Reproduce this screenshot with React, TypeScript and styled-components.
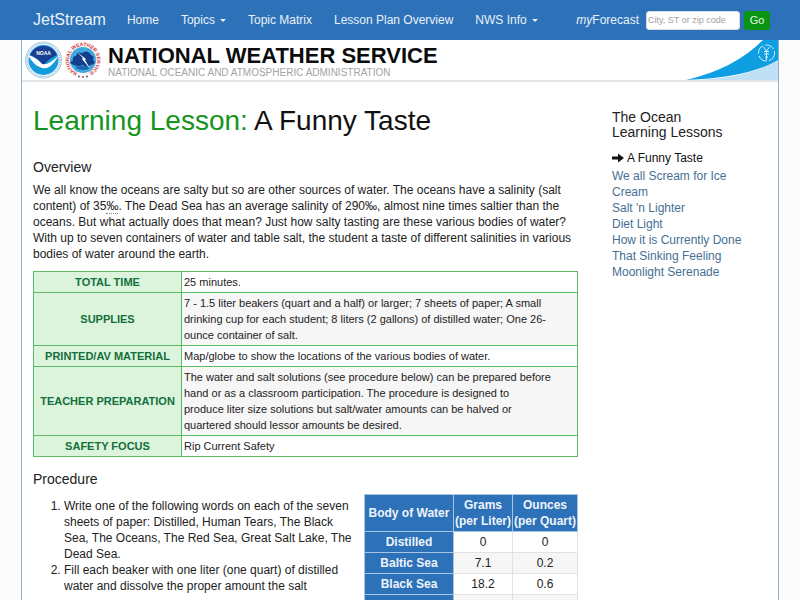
import React from "react";
import styled, { createGlobalStyle } from "styled-components";

const SANS = '"Liberation Sans", Arial, Helvetica, sans-serif';

const GlobalStyle = createGlobalStyle`
  *, *::before, *::after { box-sizing: border-box; }
  body {
    margin: 0;
    background: #fbfbfc;
    color: #222;
    font-family: ${SANS};
    font-size: 12px;
    line-height: 16px;
  }
`;

const NavBar = styled.nav`
  display: flex;
  align-items: center;
  min-height: 40px;
  padding: 0 30px 0 33px;
  background: #2d71b9;
  color: #e9f1fa;
`;

const Brand = styled.a`
  margin-right: 10px;
  color: #e9f1fa;
  font-size: 16px;
  text-decoration: none;
`;

const NavList = styled.ul`
  display: flex;
  flex: 1;
  margin: 0;
  padding: 0;
  list-style: none;
`;

const NavLink = styled.a`
  display: flex;
  align-items: center;
  gap: 5px;
  padding: 0 11px;
  color: #e9f1fa;
  text-decoration: none;
  white-space: nowrap;
`;

const Caret = styled.span`
  border: 3px solid transparent;
  border-top-color: currentColor;
  border-bottom: 0;
`;

const ForecastForm = styled.form`
  display: flex;
  align-items: center;
  gap: 4px;
`;

const ForecastLabel = styled.label`
  margin-right: 3px;
`;

const ForecastInput = styled.input`
  width: 94px;
  height: 19px;
  padding: 0 1px;
  border: 1px solid #d5dde6;
  border-radius: 3px;
  background: #fff;
  font: 9px ${SANS};
  &::placeholder { color: #a2a2a2; opacity: 1; }
`;

const GoButton = styled.button`
  width: 26px;
  height: 19px;
  padding: 0;
  border: 0;
  border-radius: 3px;
  background: #0a9412;
  color: #e4f6e4;
  font: 11px ${SANS};
`;

const Container = styled.div`
  margin: 0 21px;
  border: solid #8eb0c8;
  border-width: 0 1px;
  background: #fff;
`;

const Banner = styled.header`
  display: flex;
  align-items: stretch;
  height: 42px;
  padding-left: 3px;
  border-bottom: 2px solid #e4e4e4;
`;

const Logos = styled.div`
  display: flex;
  align-items: center;
  gap: 2px;
`;

const BannerText = styled.div`
  flex: 1;
  padding: 5px 0 0 6px;
  white-space: nowrap;
`;

const Agency = styled.div`
  color: #0c0c0c;
  font-size: 22px;
  font-weight: bold;
  line-height: 21px;
`;

const Department = styled.div`
  color: #a3a3a3;
  font-size: 10px;
  line-height: 13px;
`;

const Columns = styled.div`
  display: flex;
`;

const Main = styled.main`
  width: 75%;
  padding: 22px 11px;
`;

const Side = styled.aside`
  width: 25%;
  padding: 28px 30px 0 23px;
`;

const Title = styled.h1`
  margin: 0 0 21px;
  color: #111;
  font-size: 28px;
  font-weight: normal;
  line-height: 34px;
  span { color: #149420; }
`;

const Heading = styled.h2`
  margin: 0 0 7px;
  color: #222;
  font-size: 14px;
  font-weight: normal;
  line-height: 16px;
`;

const Paragraph = styled.p`
  margin: 0 0 9px;
`;

const Unit = styled.abbr`
  border-bottom: 1px dotted #888;
  text-decoration: none;
`;

const InfoTable = styled.table`
  width: 100%;
  margin-bottom: 14px;
  border-collapse: collapse;
  font-size: 11px;
  th, td {
    padding: 2px;
    border: 1px solid #5cbb63;
  }
  th {
    width: 148px;
    background: #dcf3dc;
    color: #12703a;
    white-space: nowrap;
  }
  td {
    text-align: left;
    white-space: pre-line;
  }
  tr:nth-child(even) td { background: #f6f6f6; }
`;

const Procedure = styled.div`
  display: flex;
  align-items: flex-start;
  gap: 8px;
`;

const Steps = styled.ol`
  flex: 1;
  margin: 4px 0 0;
  padding-left: 31px;
`;

const SaltTable = styled.table`
  width: 214px;
  border-collapse: collapse;
  text-align: center;
  th, td {
    padding: 2px 1px;
    border: 1px solid #e2e2e2;
  }
  th {
    border-color: #a9c5e3;
    background: #2d71b9;
    color: #eef4fb;
    white-space: nowrap;
  }
  th:first-child { width: 90px; }
  tbody tr:nth-child(even) td { background: #f6f6f6; }
`;

const SideTitle = styled.h2`
  margin: 0 0 10px;
  color: #222;
  font-size: 14px;
  font-weight: normal;
  line-height: 15px;
`;

const LessonList = styled.ul`
  margin: 0;
  padding: 0;
  list-style: none;
  a { color: #466f93; text-decoration: none; }
`;

const Current = styled.span`
  display: flex;
  align-items: center;
  gap: 3px;
  margin-bottom: 2px;
  color: #111;
`;

const NoaaLogo = () => (
  <svg width="37" height="38" viewBox="0 0 37 38" role="img" aria-label="NOAA">
    <circle cx="18.500" cy="19" r="18" fill="#eef5fa" stroke="#a9cde4" strokeWidth="1" />
    <circle cx="18.500" cy="19" r="16.500" fill="none" stroke="#6aa6cf" strokeWidth="1" strokeDasharray="1 1" />
    <circle cx="18.500" cy="19" r="15" fill="#139bdc" />
    <path d="M5 14 A14.500 14.500 0 0 1 32 14 Q26 16 18.500 24 Q11 16 5 14Z" fill="#183f91" />
    <path d="M3 14 Q11 16 17 23 Q23 25 33.500 14.500 Q30 22 24 26 Q21 28 17 27 Q9 25 3 14Z" fill="#fff" />
    <text x="18.500" y="14" textAnchor="middle" fill="#fff" fontFamily="Liberation Sans" fontWeight="bold" fontSize="5">NOAA</text>
  </svg>
);

const NwsLogo = () => (
  <svg width="38" height="38" viewBox="0 0 38 38" role="img" aria-label="National Weather Service">
    <defs>
      <path id="ring" d="M13.500 31.900 A14 14 0 1 1 24.500 31.900" />
    </defs>
    <circle cx="19" cy="19" r="18.500" fill="#fdf7f7" />
    <text fill="#cf3d45" fontFamily="Liberation Sans" fontWeight="bold" fontSize="5">
      <textPath href="#ring">NATIONAL WEATHER SERVICE</textPath>
    </text>
    <circle cx="19" cy="19" r="13" fill="#3fa8de" />
    <path d="M6 22 Q8 19 9 20 Q8 15 12 15 Q13 10 18 12 Q24 8 27 14 Q31 15 29 19 L31 21 Q30 24 26 24 Q23 27 19 24 Q13 27 6 22Z" fill="#123f8c" />
    <path d="M11 26 Q19 24 27 26 Q24 29 19 29 Q14 29 11 26Z" fill="#1d63ad" />
    <path d="M13 11 L19 17 L18 18 L27 29 L21 19 L22 18Z" fill="#fff" />
    <g fill="#3c61a8">
      <circle cx="15" cy="35.500" r="1" />
      <circle cx="23" cy="35.500" r="1" />
    </g>
    <circle cx="19" cy="36" r="1" fill="#cf3d45" />
  </svg>
);

const Swoosh = () => (
  <svg width="92" height="40" viewBox="0 0 92 40" aria-hidden="true">
    <path d="M0 40 Q58 40 92 20 V40Z" fill="#bfe0f5" />
    <path d="M0 40 Q48 29 77 0 H92 V20 Q62 38 0 40Z" fill="#0d9fe1" />
    <g fill="none" stroke="#d5effb" strokeWidth="1">
      <circle cx="80.500" cy="13" r="8" strokeDasharray="10 2" />
      <path d="M80.500 12 V20 M77.500 7 L80.500 11 L83.500 7 M78 11.500 H83 M78 14 H83 M79 17 H82" />
    </g>
  </svg>
);

const ArrowIcon = () => (
  <svg width="12" height="10" viewBox="0 0 12 10" aria-hidden="true">
    <path d="M0 3.500 H6 V0.500 L12 5 L6 9.500 V6.500 H0Z" fill="#111" />
  </svg>
);

const navItems = [
  { label: "Home" },
  { label: "Topics", menu: true },
  { label: "Topic Matrix" },
  { label: "Lesson Plan Overview" },
  { label: "NWS Info", menu: true },
];

const info = [
  ["TOTAL TIME", "25 minutes."],
  [
    "SUPPLIES",
    "7 - 1.5 liter beakers (quart and a half) or larger; 7 sheets of paper; A small\ndrinking cup for each student; 8 liters (2 gallons) of distilled water; One 26-\nounce container of salt.",
  ],
  ["PRINTED/AV MATERIAL", "Map/globe to show the locations of the various bodies of water."],
  [
    "TEACHER PREPARATION",
    "The water and salt solutions (see procedure below) can be prepared before\nhand or as a classroom participation. The procedure is designed to\nproduce liter size solutions but salt/water amounts can be halved or\nquartered should lessor amounts be desired.",
  ],
  ["SAFETY FOCUS", "Rip Current Safety"],
];

const waters = [
  ["Distilled", "0", "0"],
  ["Baltic Sea", "7.1", "0.2"],
  ["Black Sea", "18.2", "0.6"],
  ["The Oceans", "35.1", "1.2"],
];

const lessons = [
  "We all Scream for Ice Cream",
  "Salt 'n Lighter",
  "Diet Light",
  "How it is Currently Done",
  "That Sinking Feeling",
  "Moonlight Serenade",
];

export default function App() {
  return (
    <>
      <GlobalStyle />
      <NavBar>
        <Brand href="#">JetStream</Brand>
        <NavList>
          {navItems.map((item) => (
            <li key={item.label}>
              <NavLink href="#">
                {item.label}
                {item.menu && <Caret />}
              </NavLink>
            </li>
          ))}
        </NavList>
        <ForecastForm>
          <ForecastLabel htmlFor="place"><i>my</i>Forecast</ForecastLabel>
          <ForecastInput id="place" type="text" placeholder="City, ST or zip code" />
          <GoButton type="submit">Go</GoButton>
        </ForecastForm>
      </NavBar>
      <Container>
        <Banner>
          <Logos>
            <NoaaLogo />
            <NwsLogo />
          </Logos>
          <BannerText>
            <Agency>NATIONAL WEATHER SERVICE</Agency>
            <Department>NATIONAL OCEANIC AND ATMOSPHERIC ADMINISTRATION</Department>
          </BannerText>
          <Swoosh />
        </Banner>
        <Columns>
          <Main>
            <Title><span>Learning Lesson:</span> A Funny Taste</Title>
            <Heading>Overview</Heading>
            <Paragraph>
              We all know the oceans are salty but so are other sources of water. The oceans have a
              salinity (salt content) of 35<Unit title="parts per thousand">‰</Unit>. The Dead Sea has
              an average salinity of 290‰, almost nine times saltier than the oceans. But what actually
              does that mean? Just how salty tasting are these various bodies of water? With up to seven
              containers of water and table salt, the student a taste of different salinities in various
              bodies of water around the earth.
            </Paragraph>
            <InfoTable>
              <tbody>
                {info.map(([name, text]) => (
                  <tr key={name}>
                    <th scope="row">{name}</th>
                    <td>{text}</td>
                  </tr>
                ))}
              </tbody>
            </InfoTable>
            <Heading>Procedure</Heading>
            <Procedure>
              <Steps>
                <li>
                  Write one of the following words on each of the seven sheets of paper: Distilled,
                  Human Tears, The Black Sea, The Oceans, The Red Sea, Great Salt Lake, The Dead Sea.
                </li>
                <li>
                  Fill each beaker with one liter (one quart) of distilled water and dissolve the proper
                  amount the salt
                </li>
              </Steps>
              <SaltTable>
                <thead>
                  <tr>
                    <th scope="col">Body of Water</th>
                    <th scope="col">Grams<br />(per Liter)</th>
                    <th scope="col">Ounces<br />(per Quart)</th>
                  </tr>
                </thead>
                <tbody>
                  {waters.map(([name, grams, ounces]) => (
                    <tr key={name}>
                      <th scope="row">{name}</th>
                      <td>{grams}</td>
                      <td>{ounces}</td>
                    </tr>
                  ))}
                </tbody>
              </SaltTable>
            </Procedure>
          </Main>
          <Side>
            <SideTitle>The Ocean<br />Learning Lessons</SideTitle>
            <LessonList>
              <li><Current aria-current="page"><ArrowIcon />A Funny Taste</Current></li>
              {lessons.map((name) => (
                <li key={name}><a href="#">{name}</a></li>
              ))}
            </LessonList>
          </Side>
        </Columns>
      </Container>
    </>
  );
}
